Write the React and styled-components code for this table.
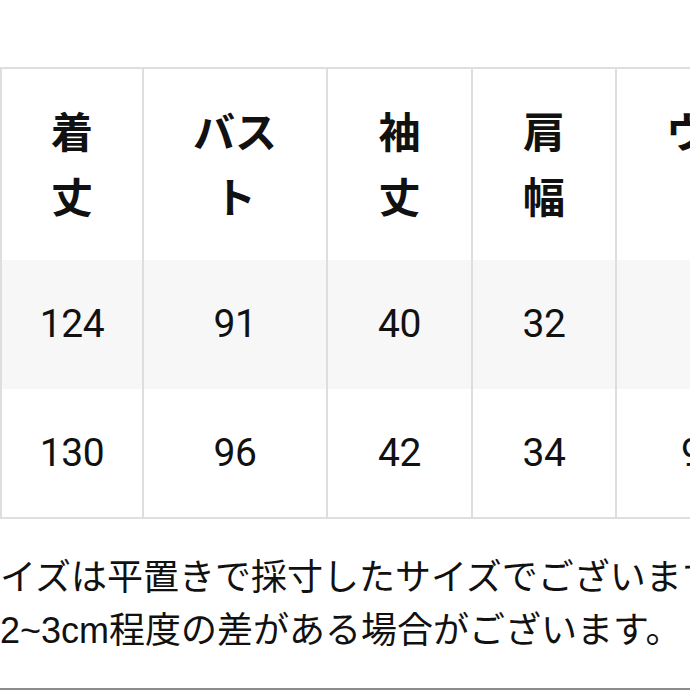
import React from 'react';
import styled, { createGlobalStyle } from 'styled-components';

const GlobalStyle = createGlobalStyle`
  html, body {
    margin: 0;
    padding: 0;
    background: #fff;
  }
  body {
    width: 690px;
    height: 690px;
    overflow: hidden;
    color: #111;
    font-family: "Noto Sans CJK JP", sans-serif;
  }
`;

const columns = [
  { label: ['着', '丈'], width: 142, values: ['124', '130'] },
  { label: ['バス', 'ト'], width: 184, values: ['91', '96'] },
  { label: ['袖', '丈'], width: 145, values: ['40', '42'] },
  { label: ['肩', '幅'], width: 144, values: ['32', '34'] },
  { label: ['ウエス', 'ト'], width: 226, values: ['88', '92-96'] },
];

const rows = [
  { height: 129, shade: true },
  { height: 128, shade: false },
];

const Page = styled.div`
  width: 690px;
  height: 690px;
  box-sizing: border-box;
  overflow: hidden;
  padding-top: 67px;
  display: flex;
  flex-direction: column;
  border-bottom: 2px solid #8c8c8c;
`;

const Table = styled.div`
  align-self: flex-start;
  display: flex;
  flex-direction: column;
  width: max-content;
  border-top: 2px solid #dedede;
  border-bottom: 2px solid #dedede;
  border-left: 2px solid #dedede;
`;

const Row = styled.div`
  display: flex;
  height: ${(p) => p.$h}px;
  background: ${(p) => (p.$shade ? '#f7f7f7' : '#fff')};
`;

const Cell = styled.div`
  flex-shrink: 0;
  box-sizing: border-box;
  width: ${(p) => p.$w}px;
  border-right: 2px solid #dedede;
  display: flex;
  align-items: center;
  justify-content: center;
`;

const HeadLabel = styled.div`
  font-family: "Noto Sans CJK JP", sans-serif;
  font-weight: 700;
  font-size: 42px;
  line-height: 65px;
  text-align: center;
  margin-top: -5px;
`;

const Value = styled.span`
  font-family: Roboto, "Noto Sans", sans-serif;
  font-weight: 400;
  font-size: 39px;
  line-height: 1;
  letter-spacing: -0.5px;
  white-space: nowrap;
`;

const Note = styled.div`
  margin: 32px 0 0 -36px;
  white-space: nowrap;
  font-family: "Liberation Sans", "Noto Sans CJK JP", sans-serif;
  font-size: 36px;
  line-height: 53px;
  color: #111;
`;

export default function App() {
  return (
    <>
      <GlobalStyle />
      <Page>
        <Table>
          <Row $h={191}>
            {columns.map((c, i) => (
              <Cell key={i} $w={c.width}>
                <HeadLabel>
                  {c.label[0]}
                  <br />
                  {c.label[1]}
                </HeadLabel>
              </Cell>
            ))}
          </Row>
          {rows.map((r, ri) => (
            <Row key={ri} $h={r.height} $shade={r.shade}>
              {columns.map((c, i) => (
                <Cell key={i} $w={c.width}>
                  <Value>{c.values[ri]}</Value>
                </Cell>
              ))}
            </Row>
          ))}
        </Table>
        <Note>
          サイズは平置きで採寸したサイズでございます。
          <br />
          約2~3cm程度の差がある場合がございます。
        </Note>
      </Page>
    </>
  );
}
